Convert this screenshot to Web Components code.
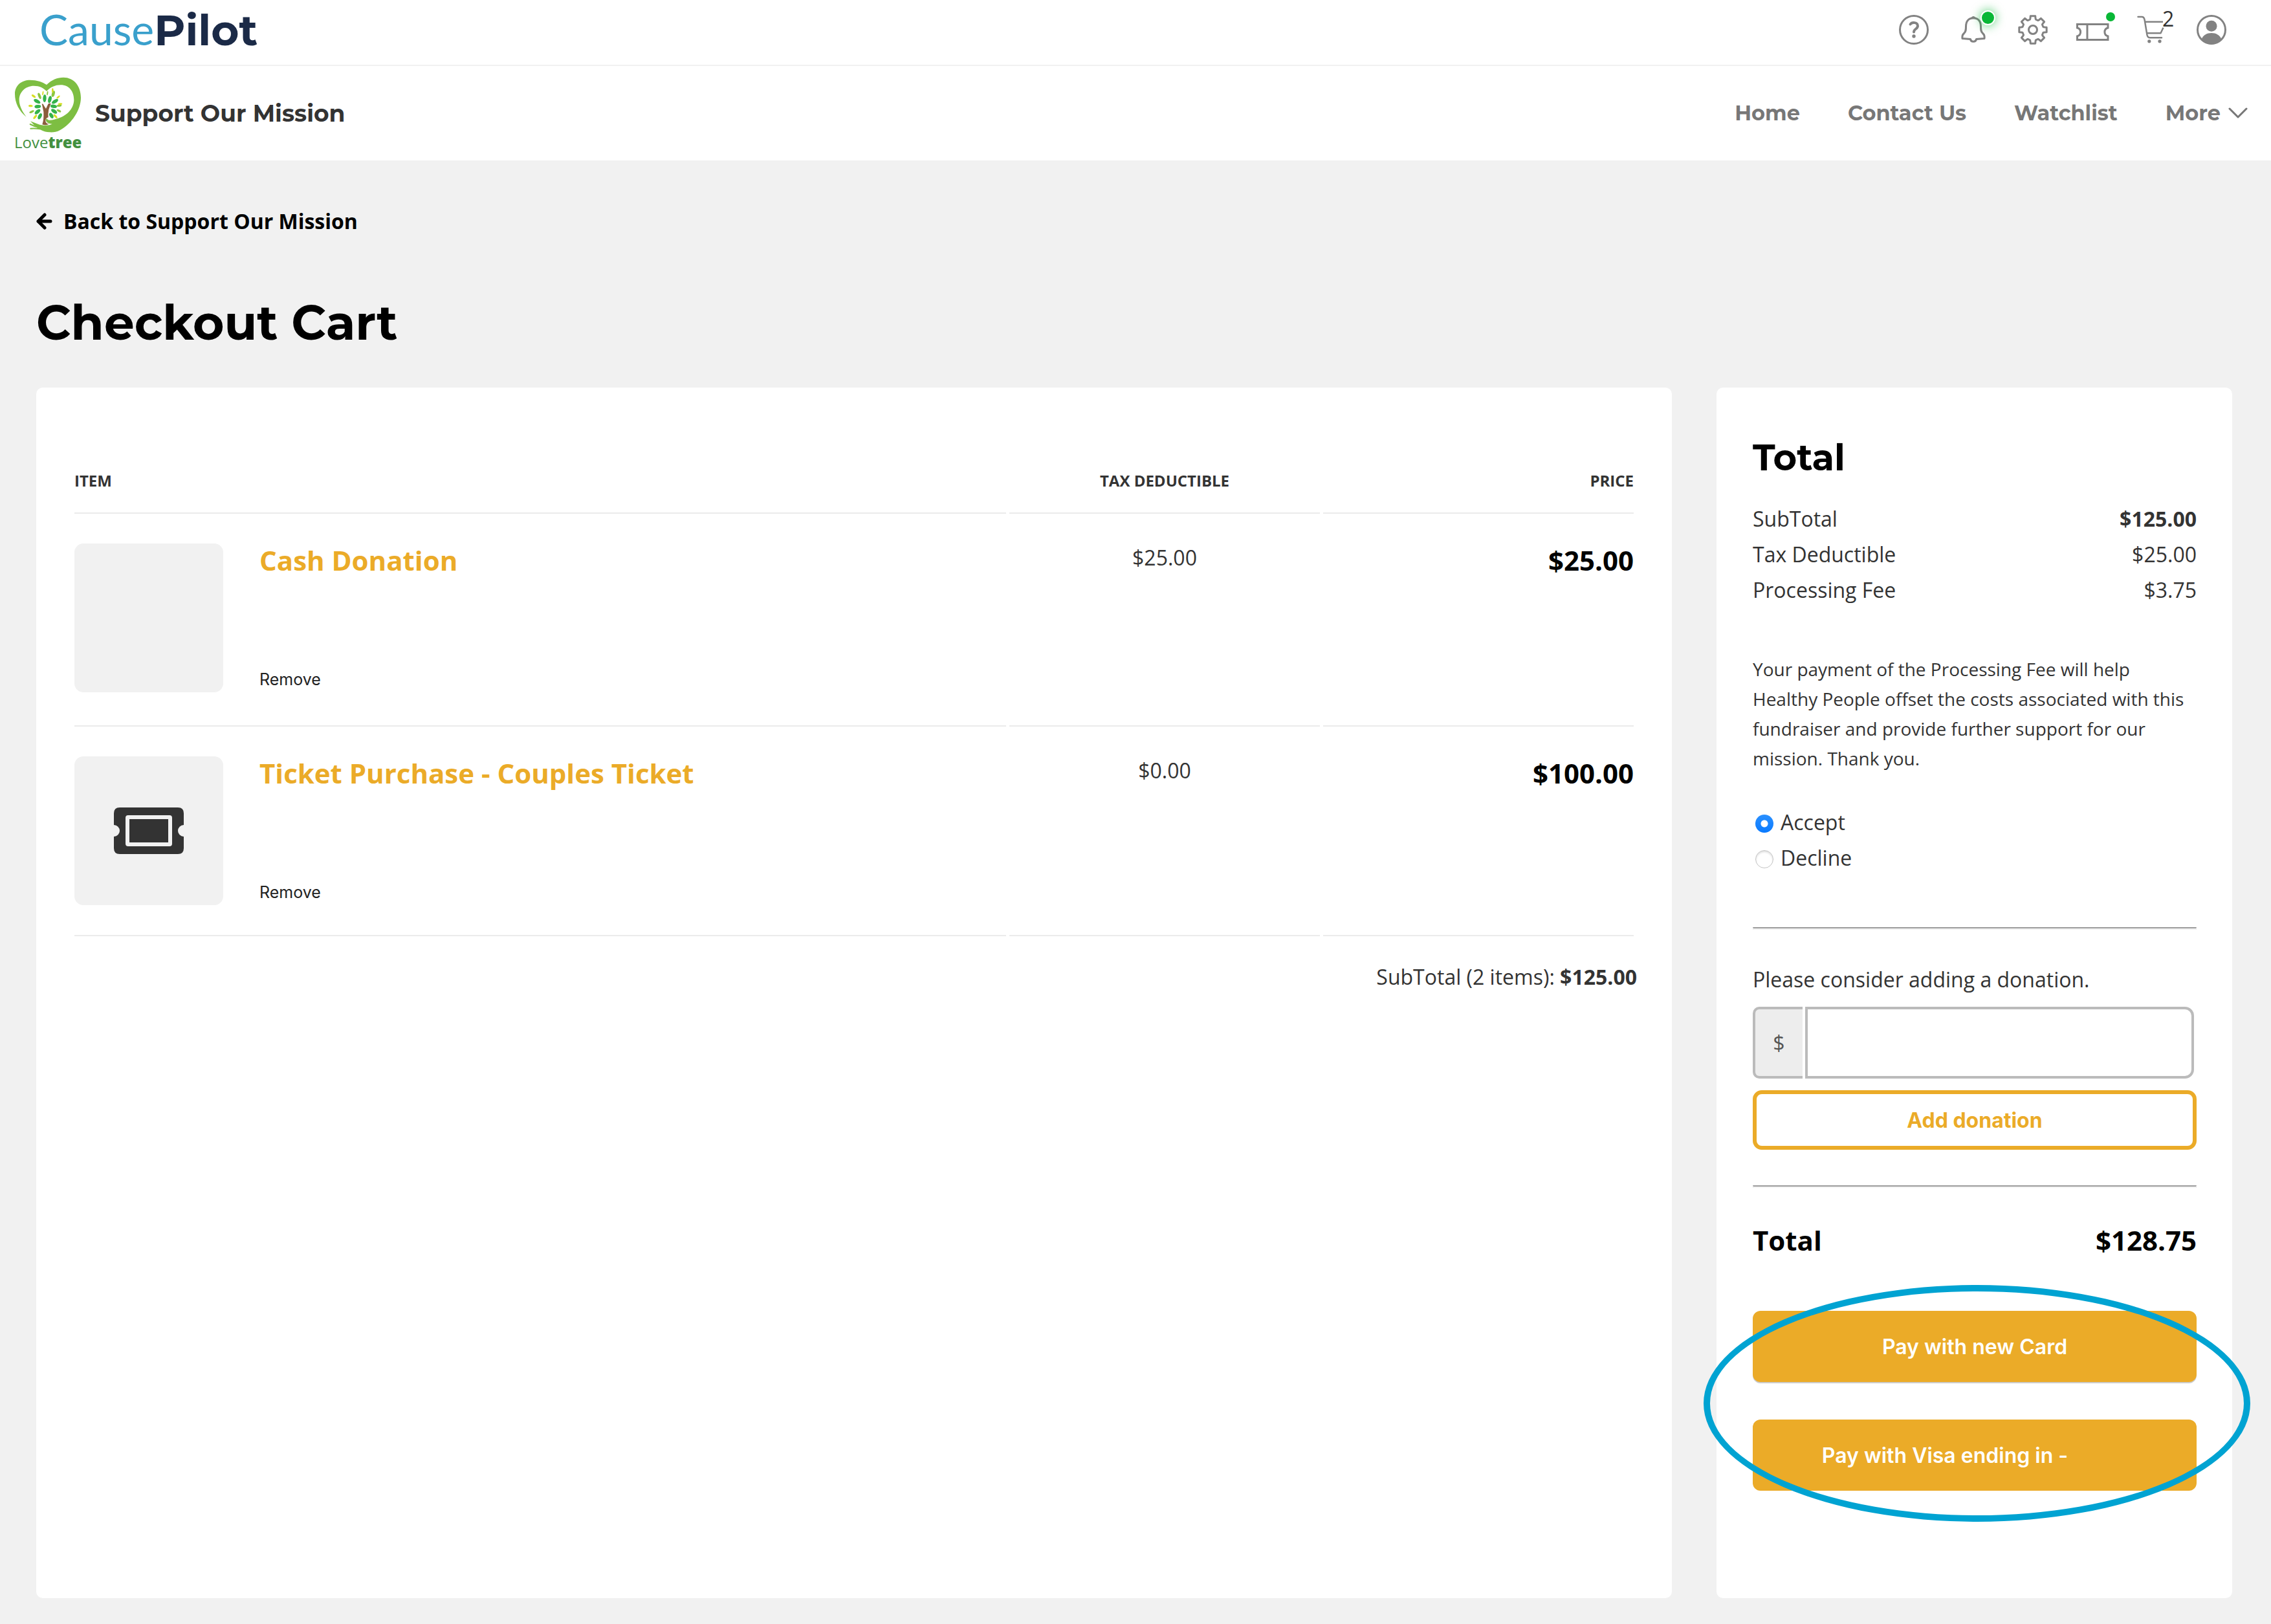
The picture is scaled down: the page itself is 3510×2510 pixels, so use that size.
<!DOCTYPE html>
<html lang="en">
<head>
<meta charset="utf-8">
<title>Checkout Cart - CausePilot</title>
<style>
:root{--gold:#ebab28;--ink:#333;--grey:#777;--page:#f1f1f1;--line:#ebebeb;--head:Montserrat,Inter,sans-serif;--body:"Open Sans",sans-serif;--ui:Inter,sans-serif}
body{margin:0;background:var(--page);color:var(--ink);font:32px/44px var(--body)}
</style>
</head>
<body>
<checkout-page>
  <brand-bar slot="top"></brand-bar>
  <mission-bar slot="top" heading="Support Our Mission"></mission-bar>
  <cart-table slot="cart" count="2" subtotal="$125.00">
    <cart-item name="Cash Donation" tax="$25.00" price="$25.00"></cart-item>
    <cart-item name="Ticket Purchase - Couples Ticket" tax="$0.00" price="$100.00" ticket></cart-item>
  </cart-table>
  <order-summary slot="summary">
    <summary-row label="SubTotal" strong>$125.00</summary-row>
    <summary-row label="Tax Deductible">$25.00</summary-row>
    <summary-row label="Processing Fee">$3.75</summary-row>
    <fee-choice slot="fee">Your payment of the Processing Fee will help Healthy People offset the costs associated with this fundraiser and provide further support for our mission. Thank you.</fee-choice>
    <donation-form slot="donation"></donation-form>
    <summary-row slot="total" label="Total" grand>$128.75</summary-row>
    <pay-options slot="pay"></pay-options>
  </order-summary>
</checkout-page>

<script>
const base = `:host,*{box-sizing:border-box}button{font:inherit;color:inherit;background:none;border:0;padding:0;margin:0;cursor:pointer}a{color:inherit;text-decoration:none}svg{display:block}`;
const define = (name, render) => customElements.define(name, class extends HTMLElement {
  connectedCallback() {
    if (this.shadowRoot) return;
    const root = this.attachShadow({ mode: "open" });
    root.innerHTML = render(this);
  }
});

/* Eight-toothed cog outline centred on 26,26 */
const cog = () => {
  const pts = [];
  for (let i = 0; i < 8; i++) {
    const c = i * 45;
    for (const [d, r] of [[-16, 16.5], [-13, 18], [-10, 21.5], [10, 21.5], [13, 18], [16, 16.5]]) {
      const a = (c + d) * Math.PI / 180;
      pts.push((26 + r * Math.cos(a)).toFixed(2) + " " + (26 + r * Math.sin(a)).toFixed(2));
    }
  }
  return "M" + pts.join("L") + "Z";
};

define("brand-bar", () => `<style>${base}
:host{display:flex;align-items:center;justify-content:space-between;height:102px;padding:0 66px 8px 61px;background:#fff;border-bottom:2px solid #f1f1f1}
.logo{font:400 66px/80px Lato,sans-serif;color:#3aa0cc}
.logo b{font:700 66px/80px var(--head);color:#1b2a47}
nav{display:flex;gap:40px}
button{position:relative;width:52px;height:52px;color:#828282}
svg{width:52px;height:52px;fill:none;stroke:currentColor;stroke-width:3;stroke-linejoin:round;stroke-linecap:round;overflow:visible}
.solid{fill:currentColor;stroke:none}
.dot{position:absolute;border-radius:50%;background:#09b736}
.alert{left:37px;top:-4px;width:23px;height:23px;border:2px solid #fff;box-shadow:0 0 14px 2px #09b73680}
.new{left:47px;top:-1px;width:14px;height:14px}
.count{position:absolute;left:42px;top:-7px;font:32px/32px var(--body);color:#333}
</style>
<a class="logo" href="#">Cause<b>Pilot</b></a>
<nav>
<button aria-label="Help"><svg viewBox="0 0 52 52"><circle cx="26" cy="26" r="21.5"/><path stroke-width="4" d="M20.5 17.5C23 13.8 32 14 32 20C32 25 26 24.5 26 29.5"/><circle class="solid" cx="26" cy="36" r="2.7"/></svg></button>
<button aria-label="Notifications"><svg viewBox="0 0 52 52"><path d="M26 8C17.5 8 14.500 14 14.500 21C14.500 26 14.500 29 11.500 31.500C9 33.500 8.500 36 9 39.500L21.500 40.500C22 45.500 30 45.500 30.500 40.500L43 39.500C43.500 36 43 33.500 40.500 31.500C37.500 29 37.500 26 37.500 21C37.500 14 34.500 8 26 8Z"/><path class="solid" d="M20.500 8.500Q22.500 7.500 23 6.500Q26 3.500 29 6.500Q29.500 7.500 31.500 8.500Z"/></svg><span class="dot alert"></span></button>
<button aria-label="Settings"><svg viewBox="0 0 52 52"><path d="${cog()}"/><circle cx="26" cy="26" r="6.500"/></svg></button>
<button aria-label="Tickets"><svg viewBox="0 0 52 52" style="stroke-linejoin:miter"><path d="M2.500 17.500H50V23A6.700 6.700 0 0 0 50 36V41.500H2.500V36A6.700 6.700 0 0 0 2.500 23ZM18 17.500V41.500"/></svg><span class="dot new"></span></button>
<button aria-label="Cart"><svg viewBox="0 0 52 52" style="stroke-width:2.500"><path d="M4.500 6H10.500Q13.500 6 14.500 10L18.500 34Q19.500 38.300 23 38.300H41"/><path stroke-linecap="butt" d="M15.500 13.700H43M19 31.200H39.500L43.500 22.700"/><circle class="solid" cx="21.800" cy="43.800" r="2.600"/><circle class="solid" cx="38" cy="43.800" r="2.600"/></svg><span class="count">2</span></button>
<button aria-label="Account"><svg viewBox="0 0 52 52"><circle cx="26" cy="26" r="21.500"/><circle class="solid" cx="26" cy="20.300" r="8.500"/><path class="solid" d="M10.500 41C13 34 19 31 26 31S39 34 41.500 41C38 46 32 48.500 26 48.500S14 46 10.500 41Z"/></svg></button>
</nav>`);

const leaf = (c, x, y, a, rx = 7, ry = 15) => `<ellipse fill="${c}" rx="${rx}" ry="${ry}" transform="translate(${x} ${y}) rotate(${a})"/>`;
const leaves = [
  ["#35b34a",163,128,2,8,18],["#35b34a",187,133,14,8,17],["#35b34a",128,142,-62,8,17],["#35b34a",211,142,58,8,17],["#35b34a",131,166,-95,8,15],["#35b34a",205,165,98,8,15],
  ["#35b34a",130,190,-130,8,16],["#35b34a",207,188,125,8,16],["#35b34a",141,211,-155,8,15],["#35b34a",194,208,150,8,14],
  ["#8cc63f",139,117,-22,6,15],["#8cc63f",203,107,15,7,15],["#8cc63f",176,104,8,3,10],["#8cc63f",103,190,-115,5,12],["#8cc63f",230,162,85,5,12],["#8cc63f",229,186,118,5,11],
  ["#d7df23",112,118,-55,5,11],["#d7df23",155,104,8,3,10],["#d7df23",200,91,0,4,10],["#d7df23",226,122,48,4,10],["#d7df23",98,163,-85,5,10],["#d7df23",235,154,85,4,10],["#d7df23",119,214,-140,5,12],["#d7df23",213,211,138,5,12]
].map(l => leaf(...l)).join("");

define("mission-bar", el => `<style>${base}
:host{display:flex;align-items:center;gap:21px;height:146px;padding:0 36px 0 22px;background:#fff}
.mark{width:104px;padding-top:2px;font:400 24px/28px var(--body);color:#43903f;white-space:nowrap}
.mark svg{width:104px;height:88px}
.mark b{font-weight:800}
h2{margin:0 auto 0 0;font:700 36px/48px var(--head);color:#333}
nav{display:flex;gap:74px;font:700 32px/44px var(--head);color:var(--grey)}
.more{display:flex;align-items:center;gap:12px}
.more svg{width:30px;height:18px;fill:none;stroke:currentColor;stroke-width:3;stroke-linecap:round;stroke-linejoin:round}
</style>
<a class="mark" href="#"><svg viewBox="22 26 312 264" aria-hidden="true">
<path fill="#7dbe42" d="M78 214C44 188 25 148 25 108C25 66 58 43 95 43C128 43 152 52 172 65C195 42 222 31 250 31C300 31 331 72 331 125C331 180 290 245 235 275C218 285 200 286 184 285C160 284 135 270 118 256L97 234L132 247C155 256 185 254 198 247C175 246 162 232 172 221C182 236 200 228 225 221C270 208 299 172 299 135C299 98 278 66 237 66C212 66 190 76 172 95C158 80 140 70 113 70C75 70 45 98 45 135C45 160 58 188 78 214Z"/>
<path fill="none" stroke="#7dbe42" stroke-width="6" stroke-linecap="round" d="M96 248Q115 258 138 264M98 268Q118 266 142 270"/>
${leaves}
<path fill="#8b5e3c" d="M150 152Q158 154 161 164L169 176L180 153Q184 150 192 152L182 180Q178 200 180 216Q164 220 168 238Q175 248 184 246Q170 256 152 249Q160 225 158 190Z"/>
</svg>Love<b>tree</b></a>
<h2>${el.getAttribute("heading")}</h2>
<nav><a href="#">Home</a><a href="#">Contact Us</a><a href="#">Watchlist</a><button class="more">More<svg viewBox="0 0 30 18" aria-hidden="true"><path d="M2 2L15 15L28 2"/></svg></button></nav>`);

define("checkout-page", () => `<style>${base}
:host{display:flex;flex-direction:column;min-height:100vh}
main{flex:1;display:flex;flex-direction:column;padding:72px 60px 40px 56px}
.back{display:flex;align-items:center;gap:17px;align-self:flex-start;font-weight:700;color:#000}
.back svg{width:25px;height:26px;fill:none;stroke:#000;stroke-width:5;stroke-linecap:round;stroke-linejoin:round}
h1{margin:90px 0 55px;font:700 74px/90px var(--head);color:#000}
.cols{flex:1;display:grid;grid-template-columns:minmax(0,1fr) 797px;gap:69px}
</style>
<slot name="top"></slot>
<main>
<a class="back" href="#"><svg viewBox="0 0 25 26" aria-hidden="true"><path d="M13 3L3 13L13 23M3 13H22"/></svg>Back to Support Our Mission</a>
<h1>Checkout Cart</h1>
<div class="cols"><slot name="cart"></slot><slot name="summary"></slot></div>
</main>`);

const ticketArt = `<svg viewBox="0 0 108 72" width="108" height="72" aria-hidden="true"><path fill="#333" d="M9 0H99Q108 0 108 9V27A9 9 0 0 0 108 45V63Q108 72 99 72H9Q0 72 0 63V45A9 9 0 0 0 0 27V9Q0 0 9 0Z"/><rect x="21" y="15" width="66" height="42" rx="1" fill="none" stroke="#f1f1f1" stroke-width="6"/></svg>`;

define("cart-table", el => `<style>${base}
:host{display:block;padding:127px 54px 0;background:#fff;border-radius:10px}
table{width:100%;table-layout:fixed;border-spacing:5px 0}
th,td{padding:0;border-bottom:2px solid var(--line);vertical-align:top;text-align:left}
th{padding-bottom:32px;font:700 24px/34px var(--body)}
th:first-child{width:60%}
td{padding:46px 0 51px}
tr:last-child td{padding-bottom:46px}
th:nth-child(2),td:nth-child(2){text-align:center}
th:nth-child(3),td:nth-child(3){text-align:right}
.price{font:700 42px/52px var(--body);color:#000}
.item{display:flex;gap:56px}
.thumb{display:grid;place-items:center;width:230px;height:230px;background:#f1f1f1;border-radius:14px}
.info{display:flex;flex-direction:column;justify-content:space-between;align-items:flex-start}
.name{font:700 42px/52px var(--body);color:var(--gold)}
.remove{font:25px/40px var(--ui);color:#222}
p{margin:41px 0 0;text-align:right}
</style>
<table><thead><tr><th>ITEM</th><th>TAX DEDUCTIBLE</th><th>PRICE</th></tr></thead><tbody>
${[...el.querySelectorAll("cart-item")].map(i => `<tr><td><div class="item"><div class="thumb">${i.hasAttribute("ticket") ? ticketArt : ""}</div><div class="info"><a class="name" href="#">${i.getAttribute("name")}</a><button class="remove">Remove</button></div></div></td><td>${i.getAttribute("tax")}</td><td class="price">${i.getAttribute("price")}</td></tr>`).join("")}
</tbody></table>
<p>SubTotal (${el.getAttribute("count")} items): <b>${el.getAttribute("subtotal")}</b></p>`);

define("summary-row", el => `<style>
:host{display:flex;justify-content:space-between;line-height:55px}
:host([strong]) .v{font-weight:700}
:host([grand]){font-weight:700;font-size:42px;line-height:52px;color:#000}
</style><span>${el.getAttribute("label")}</span><span class="v"><slot></slot></span>`);

define("order-summary", () => `<style>${base}
:host{display:block;padding:73px 55px 80px 56px;background:#fff;border-radius:10px}
h2{margin:0 0 32px;font:700 56px/70px var(--head);color:#000}
hr{height:4px;margin:55px 0;border:1px solid #ededed;border-top:2px solid #999}
hr.first{margin-top:80px}
.pay{margin-top:83px}
</style>
<h2>Total</h2><slot></slot><slot name="fee"></slot><hr class="first"><slot name="donation"></slot><hr><slot name="total"></slot><div class="pay"><slot name="pay"></slot></div>`);

define("fee-choice", () => `<style>${base}
:host{display:block}
p{margin:72px 0 48px;font-size:28px;line-height:46px}
label{display:flex;align-items:center;gap:11px;line-height:55px}
input{appearance:none;width:28px;height:28px;margin:5px 0 0 4px;border-radius:50%;border:1px solid #c4c4c4;background:#fff;box-shadow:inset 0 2px 3px #0002}
input:checked{border:0;background:radial-gradient(circle,#fff 5px,transparent 6px),linear-gradient(#2a90ff,#0a7aff);box-shadow:none}
</style>
<p><slot></slot></p>
<label><input type="radio" name="fee" checked>Accept</label>
<label><input type="radio" name="fee">Decline</label>`);

define("donation-form", () => `<style>${base}
:host{display:block}
label{display:block;margin-bottom:20px}
.field{display:flex;gap:4px;height:111px;margin:0 4px 18px 0}
.unit{display:grid;place-items:center;width:77px;border:4px solid #bbb;border-right:0;border-radius:10px 0 0 10px;background:#ededed;color:#555}
input{flex:1;min-width:0;padding:0 24px;border:4px solid #bbb;border-radius:0 14px 14px 0;background:#fff;font:inherit;color:inherit}
button{width:100%;height:92px;padding-top:2px;border:6px solid var(--gold);border-radius:14px;color:var(--gold);font:700 32px/44px var(--ui)}
</style>
<label for="amount">Please consider adding a donation.</label>
<div class="field"><span class="unit">$</span><input id="amount" type="text" inputmode="decimal"></div>
<button>Add donation</button>`);

define("pay-options", () => `<style>${base}
:host{position:relative;display:flex;flex-direction:column;gap:58px}
button{height:110px;padding-top:2px;border-radius:12px;background:var(--gold);color:#fff;font:600 32px/44px var(--ui)}
.new{box-shadow:0 2px 0 #ccc}
.saved{padding-right:92px}
.ring{position:absolute;inset:-40px -83px -48px -76px;border:10px solid #00a3d2;border-radius:50%;pointer-events:none}
</style>
<button class="new">Pay with new Card</button>
<button class="saved">Pay with Visa ending in -</button>
<div class="ring"></div>`);
</script>
</body>
</html>
